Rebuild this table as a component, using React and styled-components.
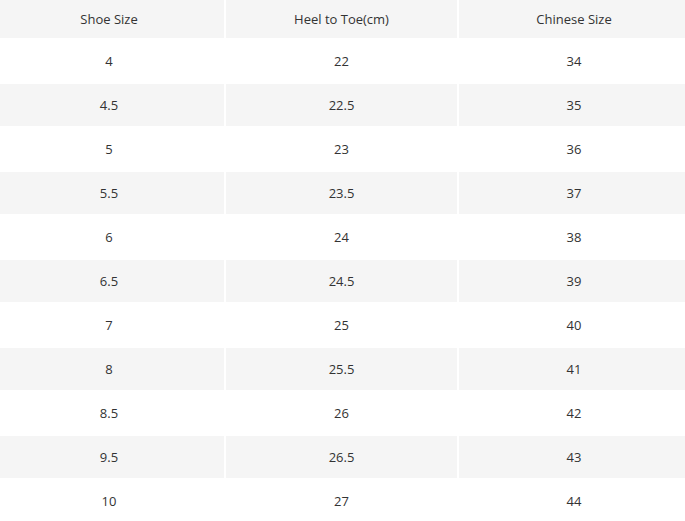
import React from "react";
import styled, { createGlobalStyle } from "styled-components";

const GlobalStyle = createGlobalStyle`
  html, body {
    margin: 0;
    padding: 0;
    background: #ffffff;
    overflow: hidden;
  }
  body {
    font-family: "Open Sans", "Liberation Sans", sans-serif;
    color: #333333;
  }
`;

const Table = styled.div`
  display: grid;
  grid-template-columns: 224px 231px 226px;
  grid-template-rows: 38px;
  grid-auto-rows: 42px;
  column-gap: 2px;
  row-gap: 2px;
  width: 685px;
`;

const Cell = styled.div`
  display: flex;
  align-items: center;
  justify-content: center;
  font-size: 13px;
  color: #333333;
  background: ${(p) => (p.$shaded ? "#f5f5f5" : "#ffffff")};
  padding-left: ${(p) => (p.$col === 2 ? "4px" : "0")};
  padding-right: ${(p) => (p.$col === 0 ? "6px" : "0")};
`;

const rows = [
  ["4", "22", "34"],
  ["4.5", "22.5", "35"],
  ["5", "23", "36"],
  ["5.5", "23.5", "37"],
  ["6", "24", "38"],
  ["6.5", "24.5", "39"],
  ["7", "25", "40"],
  ["8", "25.5", "41"],
  ["8.5", "26", "42"],
  ["9.5", "26.5", "43"],
  ["10", "27", "44"],
];

const headers = ["Shoe Size", "Heel to Toe(cm)", "Chinese Size"];

export default function App() {
  return (
    <>
      <GlobalStyle />
      <Table>
        {headers.map((h, j) => (
          <Cell key={h} $col={j} $shaded>
            {h}
          </Cell>
        ))}
        {rows.map((row, i) =>
          row.map((val, j) => (
            <Cell key={`${i}-${j}`} $col={j} $shaded={i % 2 === 1}>
              {val}
            </Cell>
          ))
        )}
      </Table>
    </>
  );
}
